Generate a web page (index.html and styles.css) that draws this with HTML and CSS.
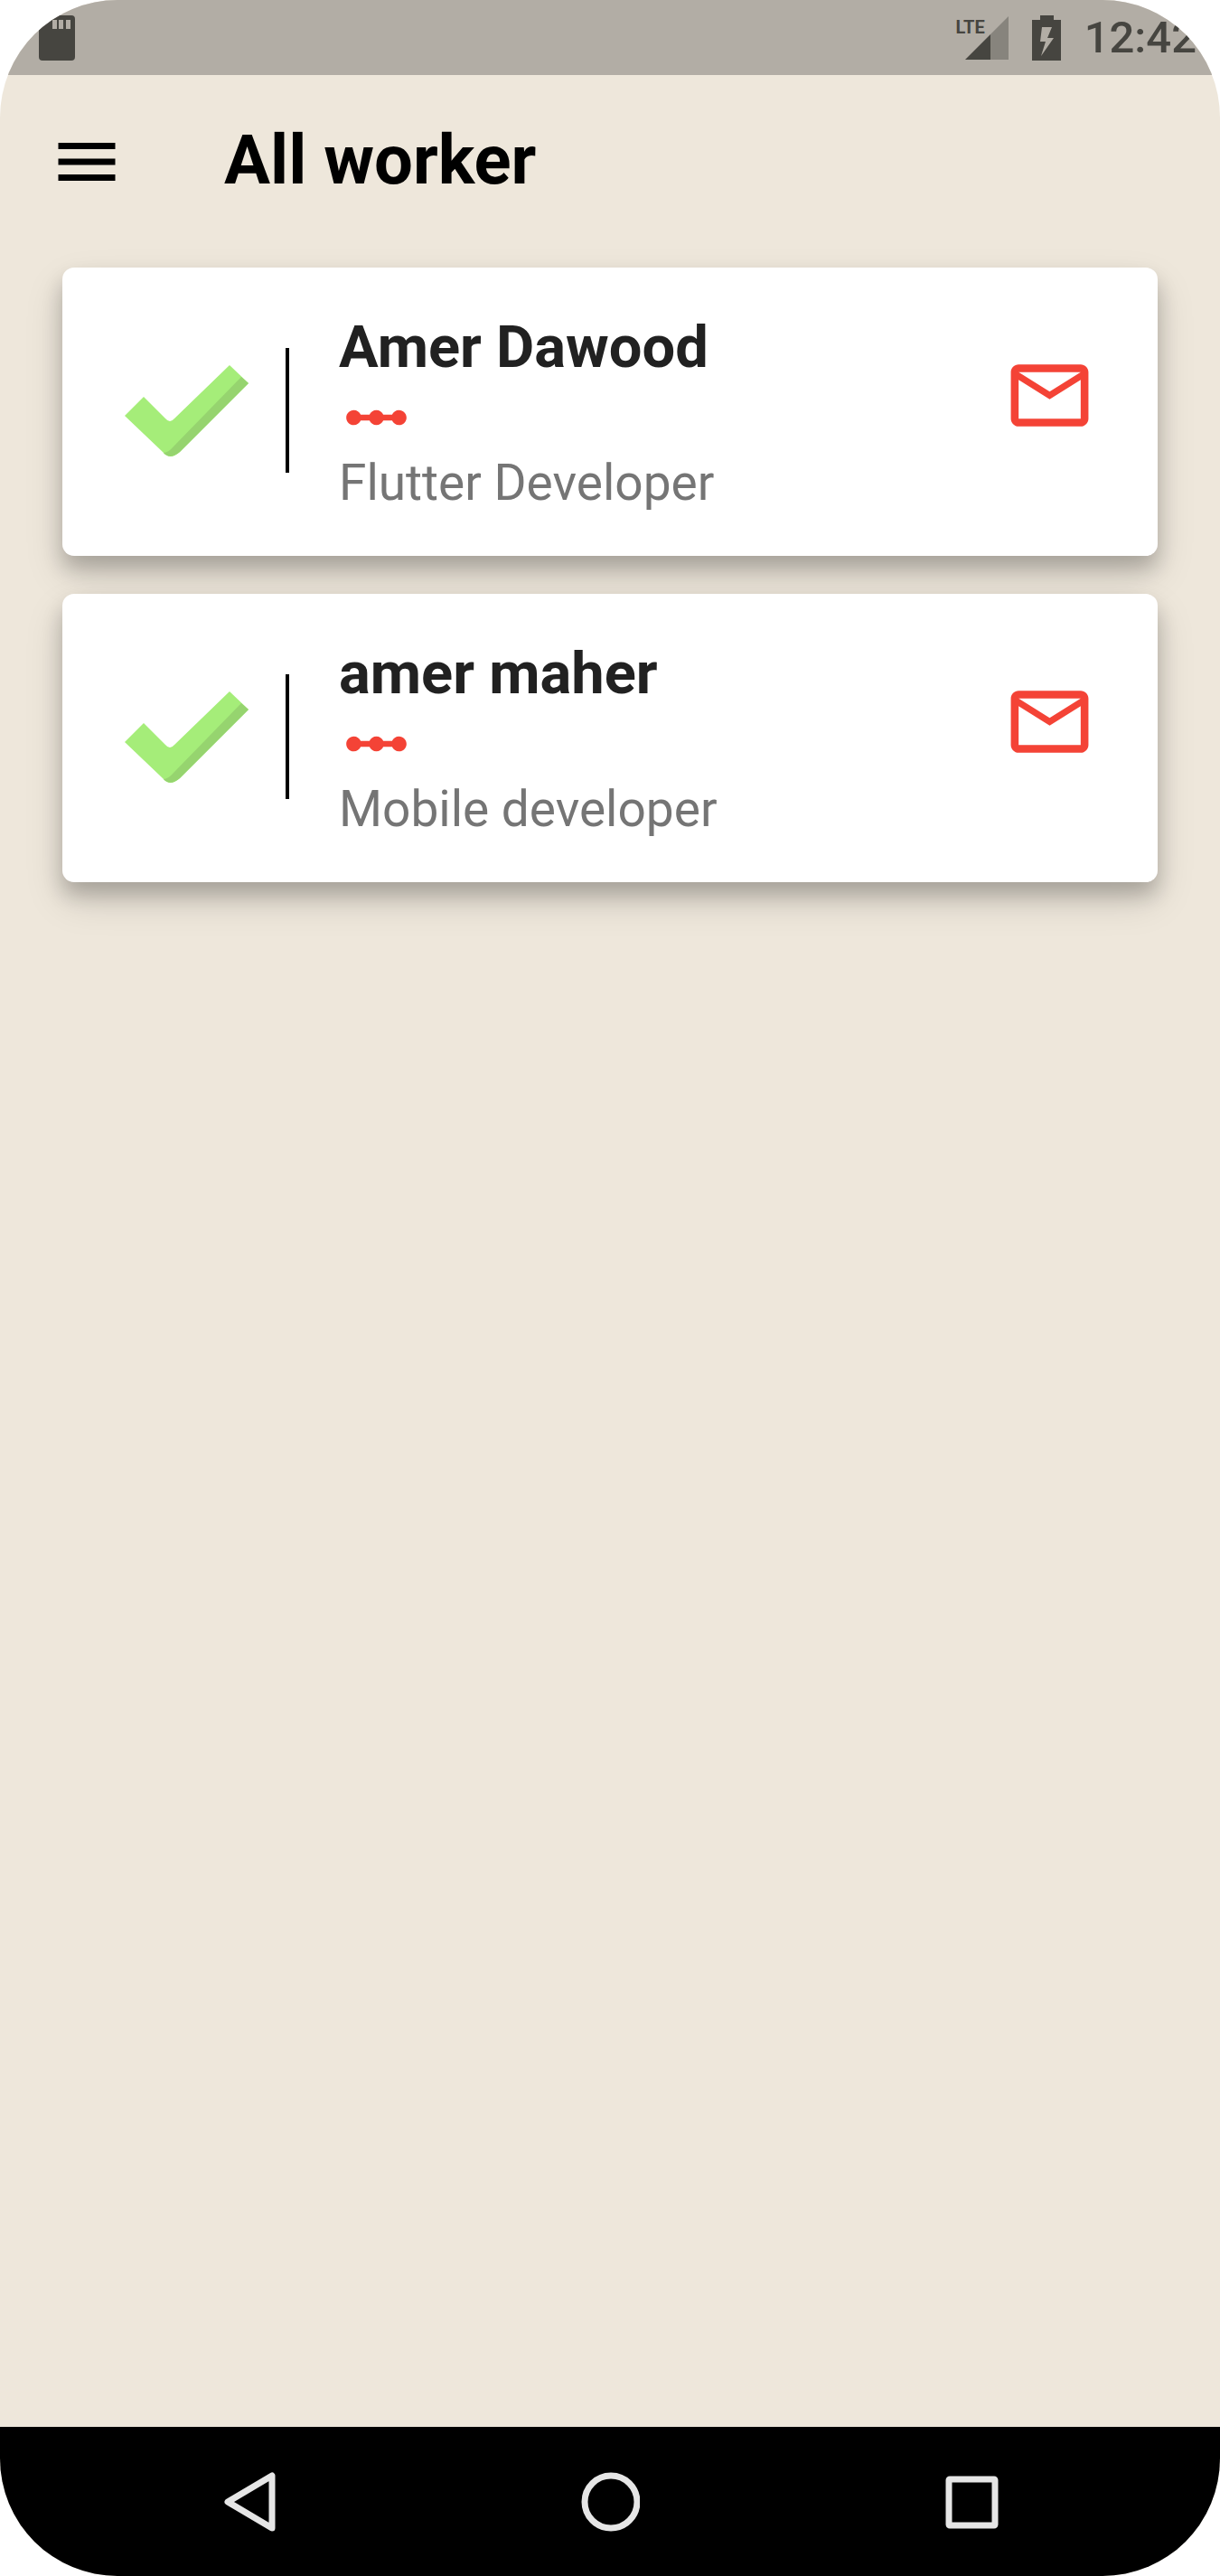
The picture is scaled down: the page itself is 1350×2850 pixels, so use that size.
FILE: index.html
```html
<!DOCTYPE html>
<html lang="en">
<head>
<meta charset="utf-8">
<meta name="viewport" content="width=device-width, initial-scale=1">
<title>All worker</title>
<link rel="stylesheet" href="styles.css">
</head>
<body>
<div class="screen">
  <div class="status-bar">
    <svg class="sd-card" viewBox="0 0 40 50" aria-hidden="true"><path fill-rule="evenodd" d="M15 0H36Q40 0 40 4V46Q40 50 36 50H4Q0 50 0 46V16ZM15 5V15H20V5ZM22 5V15H27V5ZM30 5V15H35V5Z"/></svg>
    <div class="status-right">
      <div class="signal">
        <span class="network">LTE</span>
        <svg class="bars" viewBox="0 0 48 48" aria-hidden="true"><path opacity=".4" d="M28 20L48 0V48H28Z"/><path d="M0 48L28 20V48Z"/></svg>
      </div>
      <svg class="battery" viewBox="0 0 32 50" aria-hidden="true"><path fill-rule="evenodd" d="M9 0H24V5H32V50H0V5H9ZM11 13L9 29H15L10 45L24 25H17L22 13Z"/></svg>
      <time class="clock">12:42</time>
    </div>
  </div>

  <header class="app-bar">
    <button class="icon-button" type="button" aria-label="Open menu">
      <svg class="menu-icon" viewBox="0 0 24 24"><path d="M3 18h18v-2H3v2zm0-5h18v-2H3v2zm0-7v2h18V6H3z"/></svg>
    </button>
    <h1 class="title">All worker</h1>
  </header>

  <main class="workers">
    <article class="card">
      <div class="card-lead">
        <svg class="check" viewBox="0 0 137 101" aria-hidden="true"><path fill="#a5ed79" d="M0 56L21 35L45 59Q50 65 55 59L116 0L137 20L61 96Q50 106 42 96Z"/><path fill="#96d46f" d="M129 13L137 20L61 96Q50 105 43 97Q48 97 54 90Z"/></svg>
      </div>
      <div class="card-body">
        <h2 class="name">Amer Dawood</h2>
        <svg class="scale" viewBox="0 0 24 24" aria-hidden="true"><path d="M19.500 9.500c-1.030 0-1.900.62-2.290 1.500h-2.920C13.900 10.120 13.030 9.500 12 9.500s-1.900.62-2.290 1.500H6.790c-.39-.88-1.260-1.500-2.290-1.500C3.120 9.500 2 10.620 2 12s1.120 2.500 2.500 2.500c1.030 0 1.900-.62 2.290-1.500h2.920c.39.88 1.260 1.500 2.290 1.500s1.900-.62 2.290-1.500h2.920c.39.88 1.260 1.500 2.290 1.500 1.380 0 2.500-1.120 2.500-2.500s-1.120-2.500-2.500-2.500z"/></svg>
        <p class="role">Flutter Developer</p>
      </div>
      <button class="icon-button mail-button" type="button" aria-label="Email Amer Dawood">
        <svg class="mail" viewBox="0 0 24 24"><path d="M22 6c0-1.100-.9-2-2-2H4c-1.100 0-2 .9-2 2v12c0 1.100.9 2 2 2h16c1.100 0 2-.9 2-2V6zm-2 0l-8 5-8-5h16zm0 12H4V8l8 5 8-5v10z"/></svg>
      </button>
    </article>

    <article class="card">
      <div class="card-lead">
        <svg class="check" viewBox="0 0 137 101" aria-hidden="true"><path fill="#a5ed79" d="M0 56L21 35L45 59Q50 65 55 59L116 0L137 20L61 96Q50 106 42 96Z"/><path fill="#96d46f" d="M129 13L137 20L61 96Q50 105 43 97Q48 97 54 90Z"/></svg>
      </div>
      <div class="card-body">
        <h2 class="name">amer maher</h2>
        <svg class="scale" viewBox="0 0 24 24" aria-hidden="true"><path d="M19.500 9.500c-1.030 0-1.900.62-2.290 1.500h-2.920C13.900 10.120 13.030 9.500 12 9.500s-1.900.62-2.290 1.500H6.790c-.39-.88-1.260-1.500-2.290-1.500C3.120 9.500 2 10.620 2 12s1.120 2.500 2.500 2.500c1.030 0 1.900-.62 2.290-1.500h2.920c.39.88 1.260 1.500 2.290 1.500s1.900-.62 2.290-1.500h2.920c.39.88 1.260 1.500 2.290 1.500 1.380 0 2.500-1.120 2.500-2.500s-1.120-2.500-2.500-2.500z"/></svg>
        <p class="role">Mobile developer</p>
      </div>
      <button class="icon-button mail-button" type="button" aria-label="Email amer maher">
        <svg class="mail" viewBox="0 0 24 24"><path d="M22 6c0-1.100-.9-2-2-2H4c-1.100 0-2 .9-2 2v12c0 1.100.9 2 2 2h16c1.100 0 2-.9 2-2V6zm-2 0l-8 5-8-5h16zm0 12H4V8l8 5 8-5v10z"/></svg>
      </button>
    </article>
  </main>

  <nav class="nav-bar" aria-label="System navigation">
    <button class="icon-button" type="button" aria-label="Back">
      <svg class="nav-icon" viewBox="0 0 66 66"><path d="M59 4V62L10 33Z"/></svg>
    </button>
    <button class="icon-button" type="button" aria-label="Home">
      <svg class="nav-icon" viewBox="0 0 66 66"><circle cx="34" cy="33" r="29"/></svg>
    </button>
    <button class="icon-button" type="button" aria-label="Recent apps">
      <svg class="nav-icon" viewBox="0 0 66 66"><rect x="8" y="8" width="51" height="51" rx="1"/></svg>
    </button>
  </nav>
</div>
</body>
</html>
```
FILE: styles.css
```css
* {
  box-sizing: border-box;
}

body {
  margin: 0;
  background: #fff;
  font-family: Roboto, "Liberation Sans", sans-serif;
}

h1, h2, p {
  margin: 0;
}

svg {
  display: block;
}

.screen {
  display: flex;
  flex-direction: column;
  min-height: 100vh;
  overflow: hidden;
  border-radius: 130px;
  background: #eee7db;
}

.icon-button {
  display: flex;
  align-items: center;
  justify-content: center;
  padding: 0;
  border: 0;
  background: none;
  cursor: pointer;
}

/* Status bar */

.status-bar {
  display: flex;
  align-items: center;
  justify-content: space-between;
  height: 83px;
  padding: 0 26px 0 43px;
  background: #b2ada5;
  color: #464540;
  fill: #464540;
}

.sd-card {
  width: 40px;
  height: 50px;
}

.status-right {
  display: flex;
  align-items: center;
  gap: 26px;
}

.signal {
  display: flex;
  align-items: flex-start;
}

.network {
  margin-right: -22px;
  font-size: 20px;
  font-weight: 700;
  line-height: 24px;
}

.bars {
  width: 48px;
  height: 48px;
}

.battery {
  width: 32px;
  height: 50px;
}

.clock {
  font-size: 49px;
  font-weight: 500;
  line-height: 60px;
}

/* App bar */

.app-bar {
  display: flex;
  align-items: center;
  gap: 110px;
  height: 192px;
  padding: 0 54px;
}

.menu-icon {
  width: 84px;
  height: 84px;
}

.title {
  padding-bottom: 4px;
  font-size: 76px;
  font-weight: 700;
  line-height: 88px;
  color: #000;
}

/* Worker list */

.workers {
  display: flex;
  flex: 1;
  flex-direction: column;
  gap: 42px;
  padding: 21px 69px;
}

.card {
  display: flex;
  align-items: center;
  padding: 50px 68px 49px 0;
  border-radius: 13px;
  background: #fff;
  box-shadow: 0 14px 22px rgba(0, 0, 0, 0.2), 0 20px 44px rgba(0, 0, 0, 0.14);
}

.card-lead {
  display: flex;
  align-items: center;
  width: 251px;
  height: 138px;
  margin-bottom: 4px;
  padding-left: 69px;
  border-right: 4px solid #000;
}

.check {
  width: 137px;
  height: 101px;
}

.card-body {
  flex: 1;
  padding-left: 55px;
}

.name {
  font-size: 65px;
  font-weight: 700;
  line-height: 76px;
  color: #212121;
}

.scale {
  width: 83px;
  height: 80px;
  fill: #f44336;
}

.role {
  font-size: 55px;
  line-height: 64px;
  color: #757575;
}

.mail-button {
  align-self: flex-start;
  margin-top: 40px;
}

.mail {
  width: 103px;
  height: 103px;
  fill: #f44336;
}

/* System navigation */

.nav-bar {
  display: flex;
  align-items: center;
  justify-content: center;
  height: 165px;
  background: #000;
}

.nav-bar .icon-button {
  width: 400px;
  height: 100%;
}

.nav-icon {
  width: 66px;
  height: 66px;
  fill: none;
  stroke: #e6e6e6;
  stroke-width: 7px;
  stroke-linejoin: round;
}
```
